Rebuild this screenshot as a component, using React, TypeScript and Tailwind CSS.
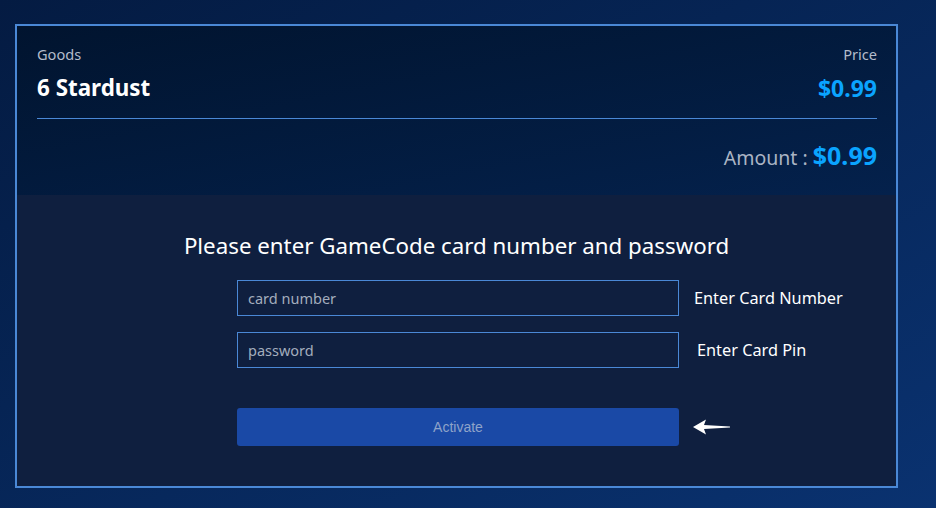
import React from 'react';

const font = { fontFamily: '"Noto Sans", "Open Sans", sans-serif' };

// white arrow pointing left, tail tapering out
const ArrowLeft = () => (
  <svg width="38" height="16" viewBox="0 0 38 16" className="block">
    <path d="M0 8 L13 0.5 L11 6 L37 7.4 L37 8.6 L11 10 L13 15.5 Z" fill="#ffffff" />
  </svg>
);

const App = () => {
  return (
    <div
      className="w-full h-[508px] bg-gradient-to-br from-[#041b42] to-[#0a3270] pt-[24px] pl-[15px]"
      style={font}
    >
      <div className="w-[883px] h-[464px] border-2 border-[#4a88d6] flex flex-col">
        {/* Order summary */}
        <div className="h-[169px] pl-[20px] pr-[19px] bg-gradient-to-br from-[#01142f] to-[#04214c]">
          <div className="flex justify-between pt-[18px]">
            <div className="flex flex-col">
              <span className="text-[14.6px] leading-[20px] text-[#b4bccb]">Goods</span>
              <span className="mt-[9px] text-[22.4px] leading-[30px] font-bold text-white">6 Stardust</span>
            </div>
            <div className="flex flex-col items-end">
              <span className="text-[14.6px] leading-[20px] text-[#b4bccb]">Price</span>
              <span className="mt-[9px] text-[23px] leading-[30px] font-bold text-[#0aa4ff]">$0.99</span>
            </div>
          </div>
          <div className="mt-[15px] h-px bg-[#4a88d6]" />
          <div className="mt-[20px] flex items-baseline justify-end">
            <span className="text-[19.5px] leading-[32px] text-[#aab4c4]">Amount :&nbsp;</span>
            <span className="text-[25px] leading-[32px] font-bold text-[#0aa4ff]">$0.99</span>
          </div>
        </div>

        {/* Card form */}
        <div className="flex-1 bg-[#0f1f3f] pt-[36px]">
          <h2 className="text-center text-[22.3px] leading-[30px] text-white">
            Please enter GameCode card number and password
          </h2>
          <div className="mt-[19px] pl-[220px] flex flex-col gap-[16px]">
            <div className="flex items-center">
              <input
                placeholder="card number"
                className="w-[442px] h-[36px] border border-[#4a88d6] bg-transparent px-[10px] text-[14.5px] text-white placeholder:text-[#a3adbd] outline-none"
                style={font}
              />
              <span className="ml-[15px] text-[16.3px] text-white">Enter Card Number</span>
            </div>
            <div className="flex items-center">
              <input
                placeholder="password"
                className="w-[442px] h-[36px] border border-[#4a88d6] bg-transparent px-[10px] text-[14.5px] text-white placeholder:text-[#a3adbd] outline-none"
                style={font}
              />
              <span className="ml-[18px] text-[16.3px] text-white">Enter Card Pin</span>
            </div>
            <div className="mt-[24px] flex items-center">
              <button
                className="w-[442px] h-[38px] rounded-[3px] bg-[#1a49a6] text-[14px] text-[#8ea3c9]"
                style={{ fontFamily: '"Liberation Sans", Arial, sans-serif' }}
              >
                Activate
              </button>
              <span className="ml-[14px]">
                <ArrowLeft />
              </span>
            </div>
          </div>
        </div>
      </div>
    </div>
  );
};

export default App;
